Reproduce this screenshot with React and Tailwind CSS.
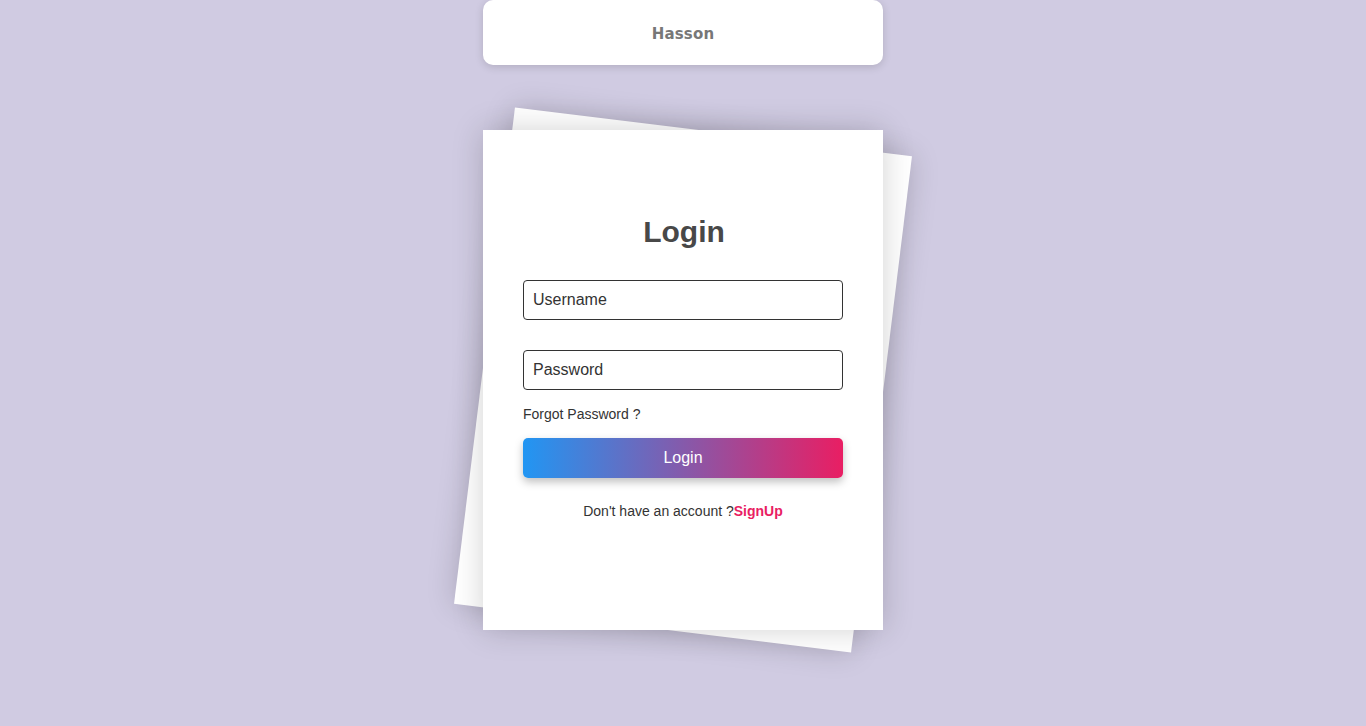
import React, { useState } from 'react';

const App = () => {
  const [username, setUsername] = useState('');
  const [password, setPassword] = useState('');

  return (
    <div className="min-h-screen w-full bg-[#d0cbe2] flex flex-col items-center font-['Liberation_Sans',Arial,sans-serif]">
      {/* Top bar */}
      <div className="w-[400px] h-[65px] bg-white rounded-[10px] shadow-[0_2px_8px_rgba(0,0,0,0.15)] flex items-center justify-center pt-1">
        <span className="text-[15px] font-bold text-[#777] font-['DejaVu_Sans',sans-serif] tracking-[0.2px]">Hasson</span>
      </div>

      {/* Card stack */}
      <div className="relative mt-[65px] w-[400px] h-[500px]">
        <div className="absolute inset-0 bg-white rotate-[7deg] shadow-[0_0_30px_rgba(0,0,0,0.18)]" />
        <div className="relative h-full bg-white shadow-[0_0_30px_rgba(0,0,0,0.18)] px-10 pt-[84px] flex flex-col">
          <h1 className="text-center text-[30px] leading-[36px] font-bold text-[#484848] pl-[2px]">Login</h1>

          <input
            type="text"
            value={username}
            onChange={(e) => setUsername(e.target.value)}
            placeholder="Username"
            className="mt-[30px] h-10 w-full border border-[#333] rounded-[4px] px-[9px] text-[16px] text-[#333] placeholder:text-[#333] outline-none"
          />
          <input
            type="password"
            value={password}
            onChange={(e) => setPassword(e.target.value)}
            placeholder="Password"
            className="mt-[30px] h-10 w-full border border-[#333] rounded-[4px] px-[9px] text-[16px] text-[#333] placeholder:text-[#333] outline-none"
          />

          <a href="#" className="mt-[14px] text-[14px] leading-5 text-[#333] self-start">Forgot Password ?</a>

          <button className="mt-[14px] h-10 w-full rounded-[5px] bg-[linear-gradient(to_right,#2196f3,#e91e63)] text-white text-[16px] shadow-[0_4px_8px_rgba(0,0,0,0.25)]">
            Login
          </button>

          <p className="mt-[23px] text-center text-[14px] leading-5 text-[#333]">
            Don't have an account ?<a href="#" className="font-bold text-[#e91e63]">SignUp</a>
          </p>
        </div>
      </div>
    </div>
  );
};

export default App;
